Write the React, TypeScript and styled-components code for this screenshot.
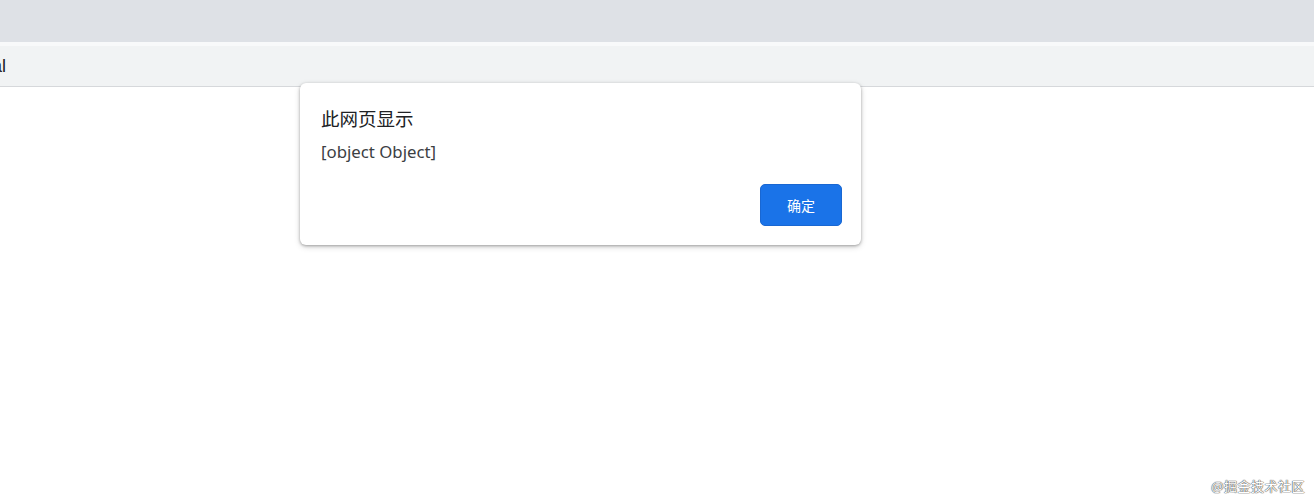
import React from "react";
import styled, { createGlobalStyle } from "styled-components";

const GlobalStyle = createGlobalStyle`
  html, body {
    margin: 0;
    padding: 0;
    background: #ffffff;
    font-family: "Noto Sans", "Noto Sans CJK SC", sans-serif;
  }
`;

const Page = styled.div`
  position: relative;
  width: 1314px;
  height: 503px;
  overflow: hidden;
  background: #ffffff;
`;

const TabStrip = styled.div`
  height: 42px;
  background: #dee1e6;
`;

const Gap = styled.div`
  height: 4px;
  background: #f8f9fa;
`;

const AddressBar = styled.div`
  height: 40px;
  background: #f1f3f4;
  border-bottom: 1px solid #d6d8db;
  display: flex;
  align-items: center;
`;

const AddressText = styled.span`
  margin-left: -8px;
  font-family: "Liberation Sans", sans-serif;
  font-size: 18px;
  color: #202124;
`;

const Dialog = styled.div`
  position: absolute;
  left: 300px;
  top: 83px;
  width: 561px;
  height: 162px;
  box-sizing: border-box;
  background: #ffffff;
  border-radius: 6px;
  box-shadow: 0 1px 3px rgba(0, 0, 0, 0.3), 0 2px 6px rgba(0, 0, 0, 0.15);
  padding: 23px 19px 19px 21px;
  display: flex;
  flex-direction: column;
`;

const Title = styled.div`
  font-family: "Noto Sans CJK SC", sans-serif;
  font-size: 18.5px;
  line-height: 24px;
  color: #202124;
`;

const Message = styled.div`
  margin-top: 11px;
  font-family: "Noto Sans", sans-serif;
  font-size: 16.8px;
  line-height: 21px;
  color: #3c4043;
`;

const Actions = styled.div`
  margin-top: auto;
  display: flex;
  justify-content: flex-end;
`;

const OkButton = styled.button`
  width: 82px;
  height: 42px;
  border: 1px solid #1967d2;
  border-radius: 5px;
  background: #1a73e8;
  color: #ffffff;
  font-family: "Noto Sans CJK SC", sans-serif;
  font-size: 14px;
  cursor: pointer;
`;

const Watermark = styled.div`
  position: absolute;
  right: 9px;
  bottom: 8px;
  font-family: "Noto Sans CJK SC", sans-serif;
  font-size: 13px;
  color: #ffffff;
  text-shadow: 0 0 1px #555, 0 0 1px #555, 0 0 1px #555;
  letter-spacing: 0.5px;
`;

export default function App() {
  return (
    <>
      <GlobalStyle />
      <Page>
        <TabStrip />
        <Gap />
        <AddressBar>
          <AddressText>al</AddressText>
        </AddressBar>
        <Dialog>
          <Title>此网页显示</Title>
          <Message>[object Object]</Message>
          <Actions>
            <OkButton>确定</OkButton>
          </Actions>
        </Dialog>
        <Watermark>@掘金技术社区</Watermark>
      </Page>
    </>
  );
}
